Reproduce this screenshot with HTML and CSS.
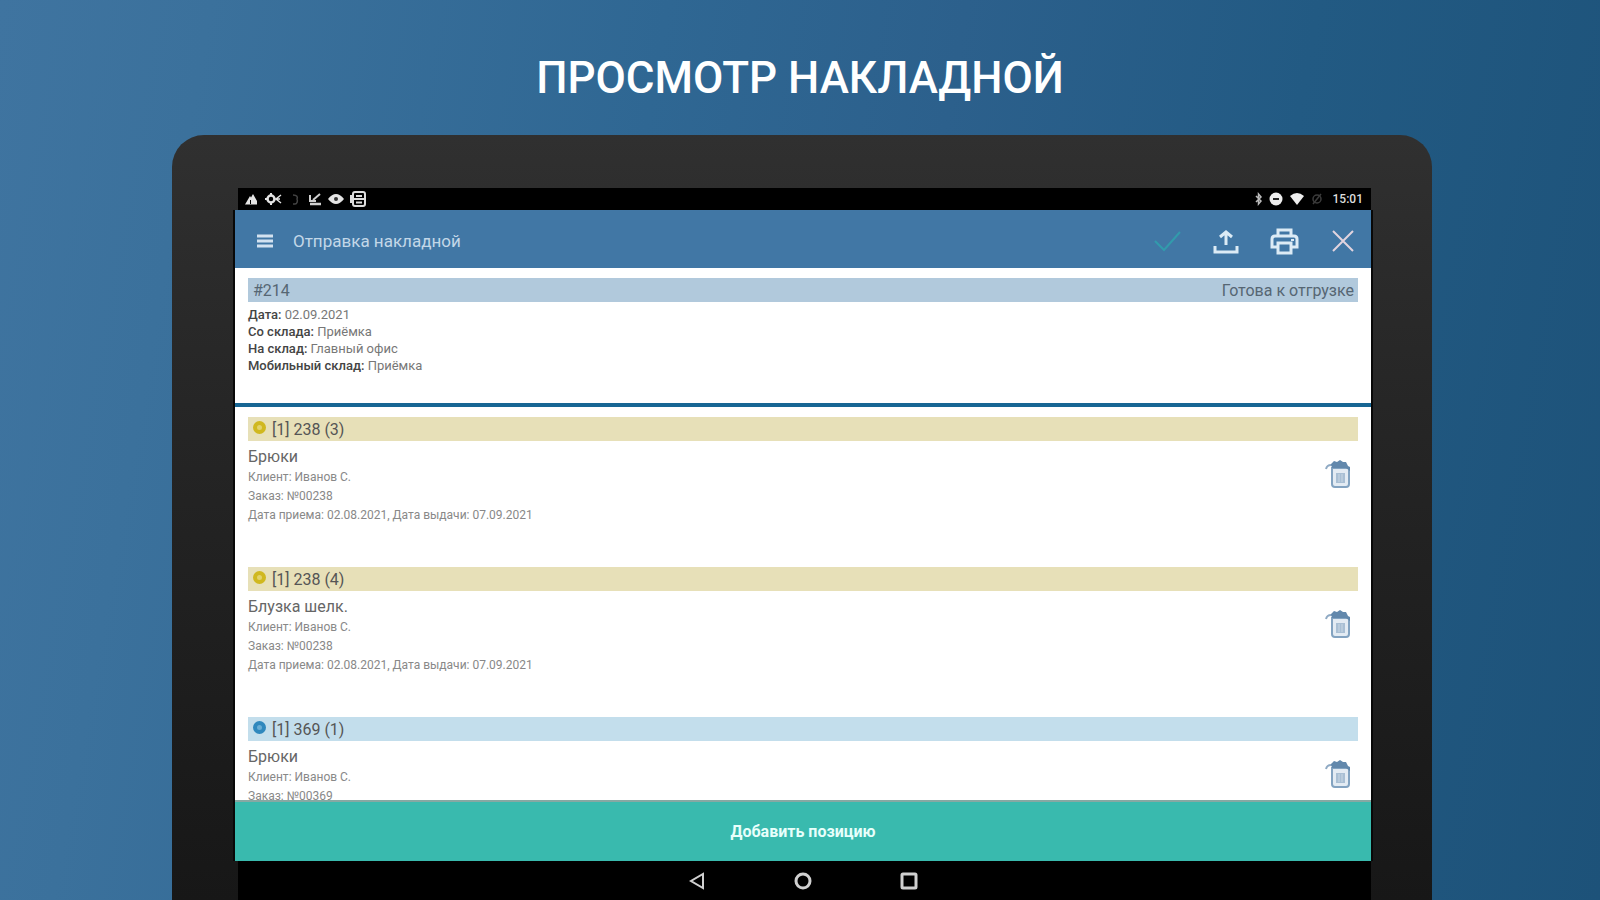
FILE: index.html
```
<!DOCTYPE html>
<html lang="ru">
<head>
  <meta charset="UTF-8">
  <meta name="viewport" content="width=device-width, initial-scale=1">
  <title>Просмотр накладной</title>
  <link rel="stylesheet" href="styles.css">
</head>
<body>
  <h1>ПРОСМОТР НАКЛАДНОЙ</h1>

  <div class="tablet">
    <div class="status-bar">
      <div class="status-left">
        <svg width="14" height="14" viewBox="0 0 14 14"><path d="M1 12.500h12V9L9 2 7 5.500 6 4z" fill="#e4e4e4"/><path d="M6.500 12V8" stroke="#000" stroke-width="1"/></svg>
        <svg width="18" height="14" viewBox="0 0 18 14" fill="none" stroke="#e4e4e4"><path d="M1 7h3M7 1v2M7 11v2" stroke-width="2"/><circle cx="7" cy="7" r="3.500" stroke-width="2.500"/><path d="M17 3l-5 4 5 4M10 7h6" stroke-width="1.500"/></svg>
        <svg width="14" height="14" viewBox="0 0 14 14" fill="none" stroke="#444" stroke-width="1.500"><path d="M5 3c4 0 5 2 4 4 1 2 0 5-2 5H5"/></svg>
        <svg width="14" height="14" viewBox="0 0 14 14" fill="none" stroke="#d0d0d0"><path d="M12 2L5 8" stroke-width="2"/><path d="M2 3v6h6" stroke-width="2"/><path d="M2 12h11" stroke-width="2.500"/></svg>
        <svg width="16" height="14" viewBox="0 0 16 14"><path d="M0 7q8-10 16 0-8 10-16 0z" fill="#e4e4e4"/><circle cx="8" cy="7" r="2" fill="#333"/></svg>
        <svg width="16" height="16" viewBox="0 0 16 16" fill="none" stroke="#dedede" stroke-width="2"><rect x="3" y="1" width="12" height="14" rx="2"/><path d="M3 8h12M1 4v8M6 5h6M6 11.500h6"/></svg>
      </div>
      <div class="status-right">
        <svg width="8" height="14" viewBox="0 0 8 14" fill="none" stroke="#bbb" stroke-width="1.500"><path d="M1 4l5 5-2.500 3V2L6 5 1 10"/></svg>
        <svg width="14" height="14" viewBox="0 0 14 14"><circle cx="7" cy="7" r="6.500" fill="#eee"/><path d="M4 7h6" stroke="#222" stroke-width="2"/></svg>
        <svg width="16" height="14" viewBox="0 0 16 14"><path d="M1 4q7-6 14 0L8 13z" fill="#eee"/></svg>
        <svg width="12" height="14" viewBox="0 0 12 14" fill="none" stroke="#3c3c3c" stroke-width="1.500"><circle cx="6" cy="7" r="4"/><path d="M2 12l8-10"/></svg>
        <span class="clock">15:01</span>
      </div>
    </div>

    <div class="app">
      <header class="app-bar">
        <button class="icon-btn menu" aria-label="Меню">
          <svg width="16" height="14" viewBox="0 0 16 14" stroke="#d3e2f0" stroke-width="3"><path d="M0 2h16M0 7h16M0 12h16"/></svg>
        </button>
        <h2>Отправка накладной</h2>
        <div class="actions">
          <button class="icon-btn" aria-label="Подтвердить">
            <svg width="28" height="28" viewBox="0 0 28 28" fill="none" stroke="#329bac" stroke-width="2"><path d="M2 14l9 9L27 5"/></svg>
          </button>
          <button class="icon-btn" aria-label="Отправить">
            <svg width="28" height="28" viewBox="0 0 28 28" fill="none" stroke="#dcebf5" stroke-width="3"><path d="M15 18V5M9 10l6-5 6 5"/><path d="M4 19v6h22v-6"/></svg>
          </button>
          <button class="icon-btn" aria-label="Печать">
            <svg width="30" height="28" viewBox="0 0 30 28" fill="none" stroke="#dcebf5" stroke-width="3"><path d="M9 9V3h13v6M8 20H3v-8q0-3 3-3h19q3 0 3 3v8h-5"/><path d="M9 16h13v10H9z"/><path d="M22 13h3" stroke-width="2"/></svg>
          </button>
          <button class="icon-btn" aria-label="Закрыть">
            <svg width="28" height="28" viewBox="0 0 28 28" fill="none" stroke="#e2d4df" stroke-width="2"><path d="M4 4l20 20M24 4L4 24"/></svg>
          </button>
        </div>
      </header>

      <section class="summary">
        <div class="band band-main"><span>#214</span><span>Готова к отгрузке</span></div>
        <p><b>Дата:</b> 02.09.2021</p>
        <p><b>Со склада:</b> Приёмка</p>
        <p><b>На склад:</b> Главный офис</p>
        <p><b>Мобильный склад:</b> Приёмка</p>
      </section>

      <main class="items">
        <article class="item">
          <div class="band band-yellow"><i class="dot"></i><span>[1] 238 (3)</span></div>
          <div class="item-body">
            <div>
              <h3>Брюки</h3>
              <p>Клиент: Иванов С.</p>
              <p>Заказ: №00238</p>
              <p>Дата приема: 02.08.2021, Дата выдачи: 07.09.2021</p>
            </div>
            <button class="icon-btn trash" aria-label="Удалить">
              <svg width="26" height="30" viewBox="0 0 26 30" fill="none"><path d="M7 9h17v16q0 3-3 3H10q-3 0-3-3z" fill="#e3ebf3" stroke="#83a3c1" stroke-width="2"/><path d="M1 10q1-4 5-4h2" stroke="#8faac4" stroke-width="2"/><path d="M6 5l3-3 3 1 3-2 3 2h3l2 4 2 1v4l-4-3H7z" fill="#6288ac"/><path d="M11 14h9v10h-9z" fill="#a9bfd4"/><path d="M14 15v8M17 15v8" stroke="#c9d7e4" stroke-width="1"/></svg>
            </button>
          </div>
        </article>

        <article class="item">
          <div class="band band-yellow"><i class="dot"></i><span>[1] 238 (4)</span></div>
          <div class="item-body">
            <div>
              <h3>Блузка шелк.</h3>
              <p>Клиент: Иванов С.</p>
              <p>Заказ: №00238</p>
              <p>Дата приема: 02.08.2021, Дата выдачи: 07.09.2021</p>
            </div>
            <button class="icon-btn trash" aria-label="Удалить">
              <svg width="26" height="30" viewBox="0 0 26 30" fill="none"><path d="M7 9h17v16q0 3-3 3H10q-3 0-3-3z" fill="#e3ebf3" stroke="#83a3c1" stroke-width="2"/><path d="M1 10q1-4 5-4h2" stroke="#8faac4" stroke-width="2"/><path d="M6 5l3-3 3 1 3-2 3 2h3l2 4 2 1v4l-4-3H7z" fill="#6288ac"/><path d="M11 14h9v10h-9z" fill="#a9bfd4"/><path d="M14 15v8M17 15v8" stroke="#c9d7e4" stroke-width="1"/></svg>
            </button>
          </div>
        </article>

        <article class="item">
          <div class="band band-blue"><i class="dot"></i><span>[1] 369 (1)</span></div>
          <div class="item-body">
            <div>
              <h3>Брюки</h3>
              <p>Клиент: Иванов С.</p>
              <p>Заказ: №00369</p>
            </div>
            <button class="icon-btn trash" aria-label="Удалить">
              <svg width="26" height="30" viewBox="0 0 26 30" fill="none"><path d="M7 9h17v16q0 3-3 3H10q-3 0-3-3z" fill="#e3ebf3" stroke="#83a3c1" stroke-width="2"/><path d="M1 10q1-4 5-4h2" stroke="#8faac4" stroke-width="2"/><path d="M6 5l3-3 3 1 3-2 3 2h3l2 4 2 1v4l-4-3H7z" fill="#6288ac"/><path d="M11 14h9v10h-9z" fill="#a9bfd4"/><path d="M14 15v8M17 15v8" stroke="#c9d7e4" stroke-width="1"/></svg>
            </button>
          </div>
        </article>
      </main>

      <button class="add-btn">Добавить позицию</button>
    </div>

    <nav class="nav-bar">
      <button class="icon-btn" aria-label="Назад">
        <svg width="18" height="18" viewBox="0 0 18 18" fill="none" stroke="#d0d0d0" stroke-width="2"><path d="M15 2v14L3 9z"/></svg>
      </button>
      <button class="icon-btn" aria-label="Домой">
        <svg width="18" height="18" viewBox="0 0 18 18" fill="none" stroke="#d0d0d0" stroke-width="3"><circle cx="9" cy="9" r="7"/></svg>
      </button>
      <button class="icon-btn" aria-label="Недавние">
        <svg width="18" height="18" viewBox="0 0 18 18" fill="none" stroke="#d0d0d0" stroke-width="3"><rect x="2" y="2" width="14" height="14" rx="1"/></svg>
      </button>
    </nav>
  </div>
</body>
</html>
```
FILE: styles.css
```
* {
  box-sizing: border-box;
}
body {
  margin: 0;
  height: 100vh;
  display: flex;
  flex-direction: column;
  overflow: hidden;
  font-family: Roboto, sans-serif;
  background: linear-gradient(100deg, #3f74a0 0%, #3b719c 12%, #2f6793 38%, #2c608c 55%, #225a83 75%, #1d5279 100%);
}
h1, h2, h3, p {
  margin: 0;
  font-weight: 400;
}
h1 {
  padding-top: 52px;
  height: 135px;
  color: white;
  font-size: 44px;
  line-height: 53px;
  font-weight: 500;
  text-align: center;
}

/* tablet frame */
.tablet {
  flex: 1;
  min-height: 0;
  display: flex;
  flex-direction: column;
  margin: 0 168px 0 172px;
  padding: 53px 61px 0 63px;
  background: linear-gradient(#303030, #262626 35%, #171717);
  border-radius: 32px 32px 0 0;
}
.status-bar {
  height: 22px;
  margin-left: 3px;
  padding: 0 8px 0 6px;
  display: flex;
  justify-content: space-between;
  align-items: center;
  background: #000;
}
.status-left, .status-right {
  display: flex;
  align-items: center;
  gap: 6px;
}
.clock {
  margin-left: 4px;
  color: #ddd;
  font-size: 12px;
  font-weight: 500;
}

/* application */
.app {
  flex: 1;
  min-height: 0;
  display: flex;
  flex-direction: column;
  background: white;
  box-shadow: -2px 0 0 #080808, 2px 0 0 #080808;
}
.icon-btn {
  padding: 0;
  border: 0;
  background: none;
  display: flex;
  cursor: pointer;
}
.app-bar {
  height: 58px;
  flex: none;
  padding: 4px 14px 0 22px;
  display: flex;
  align-items: center;
  background: #4177a5;
}
.app-bar h2 {
  margin-left: 20px;
  color: #c3d7e8;
  font-size: 17px;
}
.actions {
  margin-left: auto;
  display: flex;
  gap: 30px;
}
.summary {
  height: 139px;
  flex: none;
  padding: 10px 13px 0;
  border-bottom: 4px solid #176694;
  color: #777;
  font-size: 13px;
  line-height: 17px;
}
.summary b {
  color: #444;
  font-weight: 500;
}
.band {
  height: 24px;
  margin-bottom: 4px;
  padding: 0 4px 0 5px;
  display: flex;
  align-items: center;
  color: #555;
  font-size: 16px;
}
.band-main {
  justify-content: space-between;
  background: #b1c9dc;
  color: #566673;
}
.band-yellow {
  background: #e7e0b8;
}
.band-blue {
  background: #c3deec;
}
.dot {
  width: 13px;
  height: 13px;
  margin: 0 6px 3px 0;
  border: 4px solid #d0b81f;
  border-radius: 50%;
  background: #e2d36b;
}
.band-blue .dot {
  border-color: #2f88bd;
  background: #69aed5;
}
.items {
  flex: 1;
  min-height: 0;
  padding: 10px 13px 0;
  overflow: hidden;
}
.item {
  height: 150px;
}
.item-body {
  display: flex;
  justify-content: space-between;
}
.item h3 {
  color: #666;
  font-size: 16px;
  line-height: 23px;
}
.item p {
  color: #888;
  font-size: 12px;
  line-height: 19px;
}
.trash {
  margin: 14px 7px 0 0;
  align-self: flex-start;
}
.add-btn {
  height: 61px;
  flex: none;
  border: 0;
  border-top: 2px solid #86a8a3;
  background: #39baae;
  color: #e8fffb;
  font-family: inherit;
  font-size: 16px;
  font-weight: 700;
  cursor: pointer;
}
.nav-bar {
  height: 39px;
  flex: none;
  margin-left: 3px;
  padding-right: 4px;
  display: flex;
  justify-content: center;
  align-items: center;
  gap: 88px;
  background: #000;
}
```
